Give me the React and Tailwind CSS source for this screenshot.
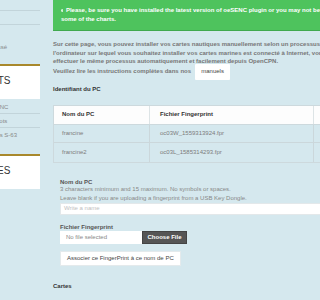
import React from "react";

function SidePanel({ title, offset }) {
  return (
    <div className="bg-white border-t-2 border-[#a8882c] h-[35px] flex items-center pb-[3px]">
      <span className={`${offset} text-[10px] text-[#333] whitespace-nowrap`}>{title}</span>
    </div>
  );
}

function Sidebar() {
  return (
    <div className="w-[40px] shrink-0 overflow-hidden text-[6px] text-[#888] leading-[8px]">
      <div className="h-[11px] border-b border-[#c2d4da]" />
      <div className="h-[14px] border-b border-[#c2d4da]" />
      <div className="h-[18px]" />
      <div className="-ml-[15px] whitespace-nowrap">Adressé</div>
      <div className="h-[13px]" />
      <SidePanel title="DOCUMENTS" offset="-ml-[54px]" />
      <div className="pt-[2px]">
        <div className="-ml-[15px] h-[13px] flex items-center whitespace-nowrap border-b border-[#c2d4da]">oeSENC</div>
        <div className="-ml-[15px] h-[14px] flex items-center whitespace-nowrap border-b border-[#c2d4da]">Mes lots</div>
        <div className="-ml-[15px] h-[14px] flex items-center whitespace-nowrap">Cartes S-63</div>
      </div>
      <div className="h-[12px]" />
      <SidePanel title="MODULES" offset="-ml-[39px]" />
    </div>
  );
}

function Alert() {
  return (
    <div className="bg-[#4ec35d] border-b border-[#41a94f] h-[31px] pl-[8px] pt-[6px] text-white font-bold text-[6px] leading-[9px] whitespace-nowrap">
      <div className="flex items-center">
        <svg width="9" height="9" viewBox="0 0 16 16" className="mr-[3px] -ml-[0.5px]">
          <circle cx="8" cy="8" r="8" fill="#fff" />
          <path d="M4.5 8.3l2.3 2.3 4.7-4.8" fill="none" stroke="#4ec35d" strokeWidth="2.2" strokeLinecap="round" strokeLinejoin="round" />
        </svg>
        Please, be sure you have installed the latest version of oeSENC plugin or you may not be able to use
      </div>
      <div>some of the charts.</div>
    </div>
  );
}

function PcTable() {
  const rows = [
    { name: "francine", file: "oc03W_1559313924.fpr" },
    { name: "francine2", file: "oc03L_1585314293.fpr" },
  ];
  return (
    <div className="mt-[12px] border border-[#cdd9dd] text-[6px] w-[300px]">
      <div className="flex h-[19px] bg-[#fdfdfd] font-bold text-[#333] border-b border-[#cdd9dd]">
        <div className="w-[96px] pl-[8px] flex items-center border-r border-[#dde4e6]">Nom du PC</div>
        <div className="w-[164px] pl-[10px] flex items-center border-r border-[#dde4e6]">Fichier Fingerprint</div>
        <div className="flex-1" />
      </div>
      {rows.map((r, i) => (
        <div key={i} className={`flex h-[18.5px] text-[#7c7c7c] ${i === 0 ? "border-b border-[#cbd7db]" : ""}`}>
          <div className="w-[96px] pl-[8px] flex items-center border-r border-[#cbd7db]">{r.name}</div>
          <div className="w-[164px] pl-[10px] flex items-center border-r border-[#cbd7db]">{r.file}</div>
          <div className="flex-1" />
        </div>
      ))}
    </div>
  );
}

function FingerprintForm() {
  return (
    <div className="pl-[7px] mt-[15px] text-[6px]">
      <div className="font-bold text-[#555] leading-[8px]">Nom du PC</div>
      <div className="text-[#888] leading-[8.5px] -mt-[0.5px]">3 characters minimum and 15 maximum. No symbols or spaces.</div>
      <div className="text-[#888] leading-[8.5px]">Leave blank if you are uploading a fingerprint from a USB Key Dongle.</div>
      <div className="h-[12px] bg-white border border-[#e3e8ea] flex items-center pl-[3px] text-[#c0c0c0] mt-[0.5px]">Write a name</div>
      <div className="font-bold text-[#555] leading-[8px] mt-[8px]">Fichier Fingerprint</div>
      <div className="flex mt-[0.5px] h-[13px]">
        <div className="w-[82px] bg-white flex items-center pl-[6px] text-[#888]">No file selected</div>
        <div className="w-[45px] bg-[#555] border border-[#444] flex items-center justify-center text-white font-bold">Choose File</div>
      </div>
      <div className="mt-[7px] w-[121px] h-[15px] bg-white border border-[#e4eaec] flex items-center pl-[6px] text-[#444]">
        Associer ce FingerPrint à ce nom de PC
      </div>
    </div>
  );
}

export default function App() {
  return (
    <div className="w-[320px] h-[300px] overflow-hidden bg-[#d5e8ee] flex font-['Liberation_Sans',Arial,sans-serif]">
      <Sidebar />
      <div className="ml-[13px] w-[300px] shrink-0">
        <Alert />
        <div className="mt-[9px] text-[6px] font-bold text-[#777] leading-[8.5px] whitespace-nowrap">
          <div>Sur cette page, vous pouvez installer vos cartes nautiques manuellement selon un processus simple.</div>
          <div>l'ordinateur sur lequel vous souhaitez installer vos cartes marines est connecté à Internet, vous pouvez</div>
          <div>effectuer le même processus automatiquement et facilement depuis OpenCPN.</div>
        </div>
        <div className="flex items-center -mt-[2px] text-[6px] font-bold text-[#777]">
          <span>Veuillez lire les instructions complètes dans nos</span>
          <span className="ml-[4px] h-[16px] w-[35px] bg-white rounded-[1px] flex items-center justify-center font-normal text-[#444]">manuels</span>
        </div>
        <div className="mt-[5px] text-[6px] font-bold text-[#333] leading-[8px]">Identifiant du PC</div>
        <PcTable />
        <FingerprintForm />
        <div className="mt-[16px] text-[6px] font-bold text-[#333] leading-[8px]">Cartes</div>
      </div>
    </div>
  );
}
